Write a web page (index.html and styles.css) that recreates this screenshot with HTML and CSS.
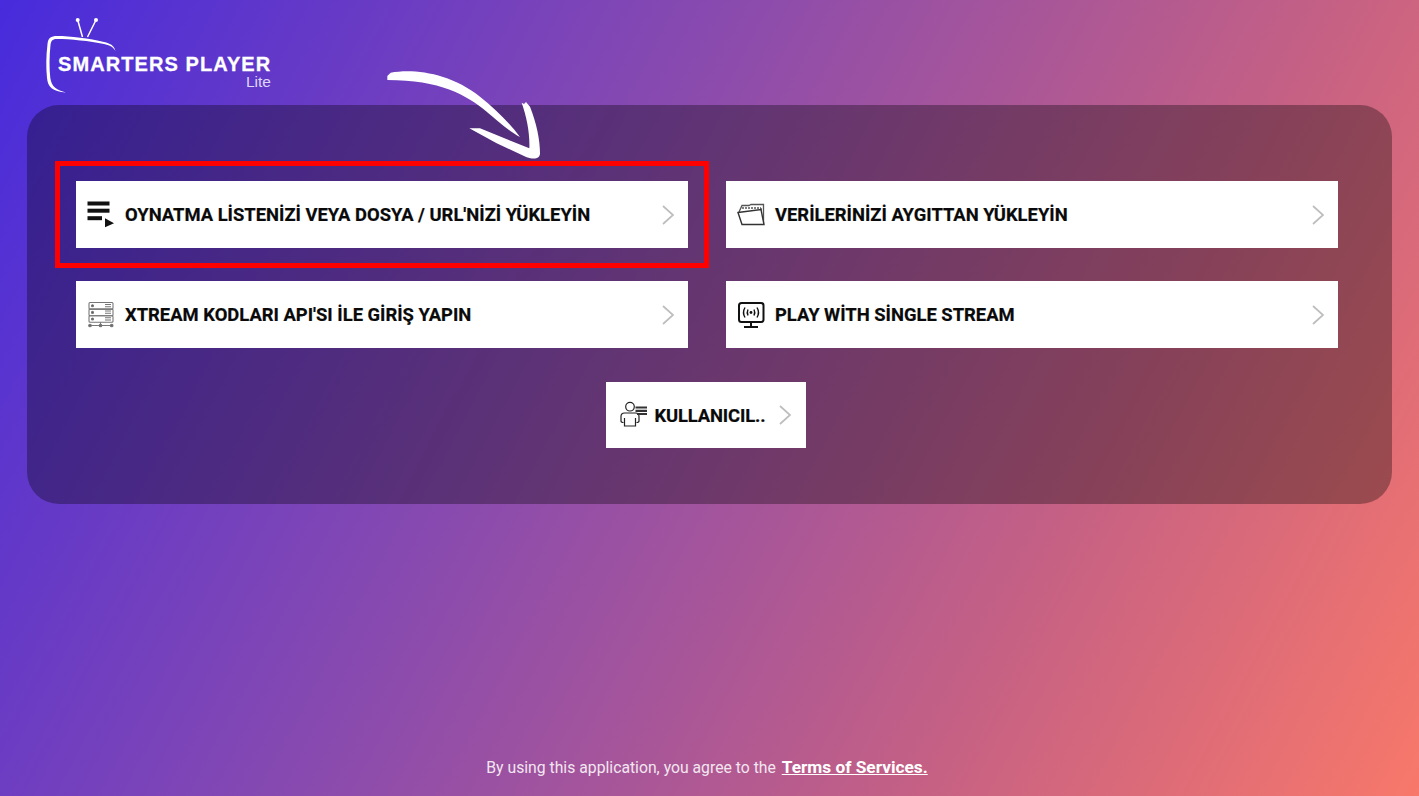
FILE: index.html
```html
<!DOCTYPE html>
<html>
<head>
    <title>Smarters Player Lite</title>
    <meta charset="UTF-8">
    <link rel="stylesheet" href="styles.css">
</head>
<body>
    <header class="top">
        <div class="logo">
            <svg class="logo-tv" width="80" height="80" viewBox="0 0 80 80" fill="none" stroke="#fff">
                <path d="M40.5 21 L35.7 4 M45.5 21 L54 4" stroke-width="1.5"/>
                <circle cx="35.7" cy="4" r="2" fill="#fff" stroke="none"/>
                <circle cx="54" cy="4" r="2" fill="#fff" stroke="none"/>
                <path d="M73.5 35 C72 29 68 27.5 62 26 C48 22.5 28 20 15 20 C9 20 6 22 5.5 28 C4 40 4 52 5 62 C6 71 10 75.5 24 76.5 C15 74 9.5 71 8.3 62 C7.2 52 7.3 40 8.5 29 C9 24.5 11 23 15 23 C28 23 48 25 62 28 C67 29 71 30.5 73.5 35 Z" fill="#fff" stroke="none"/>
            </svg>
            <div class="logo-name">SMARTERS PLAYER</div>
            <div class="logo-sub">Lite</div>
        </div>
    </header>
    <main class="panel">
        <div class="grid">
            <a class="card">
                <svg class="icon" width="30" height="30" viewBox="0 0 30 30" fill="#111">
                    <rect x="0.5" y="1.5" width="22" height="4"/>
                    <rect x="0.5" y="8.7" width="22" height="4"/>
                    <rect x="0.5" y="16.2" width="14.5" height="4"/>
                    <path d="M18 18.2 L27 23.2 L18 27.2 Z"/>
                </svg>
                <span class="label">OYNATMA LİSTENİZİ VEYA DOSYA / URL'NİZİ YÜKLEYİN</span>
                <svg class="chev" width="14" height="20" viewBox="0 0 14 20" fill="none" stroke="#bdbdbd" stroke-width="1.7"><path d="M2 1 L12 10 L2 19"/></svg>
                <span class="frame"></span>
            </a>
            <a class="card">
                <svg class="icon" width="30" height="30" viewBox="0 0 30 30" fill="none" stroke="#555" stroke-width="1.3">
                    <path d="M2 12 L5 5.5 H12 L14 4.5 H26.5 V24"/>
                    <path d="M5 8 H24" stroke-dasharray="2 1" stroke-width="1.6"/>
                    <path d="M24 8 V10"/>
                    <path d="M1 12.5 L24 9.5 L27 24.5 H5 Z" stroke="#333" stroke-width="1.4" fill="#fff"/>
                </svg>
                <span class="label">VERİLERİNİZİ AYGITTAN YÜKLEYİN</span>
                <svg class="chev" width="14" height="20" viewBox="0 0 14 20" fill="none" stroke="#bdbdbd" stroke-width="1.7"><path d="M2 1 L12 10 L2 19"/></svg>
            </a>
            <a class="card">
                <svg class="icon" width="30" height="30" viewBox="0 0 30 30" fill="none" stroke="#777" stroke-width="1.1">
                    <rect x="2" y="2.5" width="24" height="6.6" rx="1"/>
                    <rect x="2" y="9.1" width="24" height="6.6" rx="1"/>
                    <rect x="2" y="15.7" width="24" height="6.6" rx="1"/>
                    <circle cx="5.5" cy="5.8" r="1" fill="#444"/>
                    <circle cx="5.5" cy="12.4" r="1" fill="#444"/>
                    <circle cx="5.5" cy="19" r="1" fill="#444"/>
                    <path d="M18 4.5 H24 M18 6.8 H24 M18 11 H24 M18 13.3 H24 M18 17.7 H24 M18 20 H24"/>
                    <path d="M13.5 22.3 V25.5 M3 25.5 H25"/>
                    <circle cx="3" cy="25.5" r="1.3" fill="#666"/>
                    <circle cx="13.5" cy="25.5" r="1.3" fill="#666"/>
                    <circle cx="24.7" cy="25.5" r="1.3" fill="#666"/>
                </svg>
                <span class="label">XTREAM KODLARI API'SI İLE GİRİŞ YAPIN</span>
                <svg class="chev" width="14" height="20" viewBox="0 0 14 20" fill="none" stroke="#bdbdbd" stroke-width="1.7"><path d="M2 1 L12 10 L2 19"/></svg>
            </a>
            <a class="card">
                <svg class="icon" width="30" height="30" viewBox="0 0 30 30" fill="none" stroke="#111" stroke-width="2">
                    <rect x="2" y="3" width="24.5" height="19" rx="2.5"/>
                    <path d="M14 22 V27 M7 27 H21"/>
                    <circle cx="14" cy="12.5" r="1.4" fill="#111" stroke="none"/>
                    <path d="M11 9.5 C10 11.5 10 13.5 11 15.5 M17 9.5 C18 11.5 18 13.5 17 15.5 M8 7.5 C6.2 10.5 6.2 14.5 8 17.5 M20 7.5 C21.8 10.5 21.8 14.5 20 17.5" stroke-width="1.4"/>
                </svg>
                <span class="label">PLAY WİTH SİNGLE STREAM</span>
                <svg class="chev" width="14" height="20" viewBox="0 0 14 20" fill="none" stroke="#bdbdbd" stroke-width="1.7"><path d="M2 1 L12 10 L2 19"/></svg>
            </a>
        </div>
        <a class="card card-small">
            <svg class="icon" width="30" height="30" viewBox="0 0 30 30" fill="none" stroke="#222" stroke-width="1.2">
                <circle cx="10" cy="6.7" r="4.3"/>
                <path d="M1 21 V16.5 C1 14.5 2.5 13 4.5 13 H15.5 C17.5 13 19 14.5 19 16.5 V21 C19 22 18 22.5 16.5 22.5 M1 21 C1 22 2 22.5 3.5 22.5 M4.5 18 V26 H15.5 V18"/>
                <path d="M15.5 7.5 H27 M15.5 10.8 H27 M17 14 H27" stroke-width="2.2" stroke="#333"/>
            </svg>
            <span class="label label-small">KULLANICIL..</span>
            <svg class="chev" width="14" height="20" viewBox="0 0 14 20" fill="none" stroke="#bdbdbd" stroke-width="1.7"><path d="M2 1 L12 10 L2 19"/></svg>
        </a>
    </main>
    <svg class="arrow" width="190" height="110" viewBox="0 0 570 330" fill="#fff">
        <path d="M52 48 L62 38 C130 25 240 38 330 110 C375 145 420 190 450 231 C420 215 385 185 350 155 C290 105 210 60 52 60 Z"/>
        <path d="M298 205 L330 205 L478 265 C480 220 470 170 455 128 L462 132 L468 126 L480 140 C500 190 510 240 510 280 C510 295 495 300 470 292 L380 250 Z"/>
    </svg>
    <footer class="foot">By using this application, you agree to the <a class="terms">Terms of Services.</a></footer>
</body>
</html>
```

FILE: styles.css
```css
html, body {
    height: 100%;
}
body {
    margin: 0;
    min-height: 796px;
    box-sizing: border-box;
    overflow: hidden;
    display: flex;
    flex-direction: column;
    font-family: Roboto, sans-serif;
    background: linear-gradient(118deg, #472bdc 0%, #8a4bae 40%, #c46085 72%, #f8786a 100%);
}
.top {
    height: 105px;
    flex: none;
    padding-left: 42px;
}
.logo {
    position: relative;
    width: 240px;
    height: 105px;
}
.logo-tv {
    position: absolute;
    left: 0;
    top: 16px;
}
.logo-name {
    position: absolute;
    left: 16px;
    top: 55px;
    color: #fff;
    font-family: "Liberation Sans", sans-serif;
    font-weight: bold;
    font-size: 20px;
    line-height: 18px;
    letter-spacing: 1.08px;
    -webkit-text-stroke: 0.3px #fff;
    white-space: nowrap;
}
.logo-sub {
    position: absolute;
    right: 11px;
    top: 75px;
    color: #ddd6f5;
    font-family: "Liberation Sans", sans-serif;
    font-size: 15.5px;
    line-height: 13px;
}
.panel {
    margin: 0 27px;
    height: 399px;
    flex: none;
    box-sizing: border-box;
    padding: 76px 54px 0 49px;
    border-radius: 32px;
    background: rgba(0, 0, 0, 0.32);
    display: flex;
    flex-direction: column;
    align-items: center;
}
.grid {
    width: 100%;
    display: grid;
    grid-template-columns: 612px 612px;
    justify-content: space-between;
    gap: 33px 38px;
}
.card {
    position: relative;
    height: 67px;
    box-sizing: border-box;
    padding: 0 13px 0 11px;
    background: #fff;
    display: flex;
    align-items: center;
    gap: 8px;
    color: #0a0a0a;
}
.card-small {
    width: 200px;
    height: 66px;
    margin-top: 34px;
    margin-right: 3px;
    padding: 0 14px;
    gap: 5px;
}
.icon {
    flex: none;
}
.label {
    flex: 1;
    font-size: 18.4px;
    font-weight: 700;
    -webkit-text-stroke: 0.2px #0a0a0a;
    white-space: nowrap;
}
.label-small {
    letter-spacing: -0.15px;
}
.chev {
    flex: none;
}
.frame {
    position: absolute;
    top: -20px;
    bottom: -20px;
    left: -21px;
    right: -21px;
    border: 5px solid #fe0000;
}
.arrow {
    position: absolute;
    left: 370px;
    top: 60px;
}
.foot {
    margin-top: auto;
    padding: 0 5px 18px 0;
    text-align: center;
    color: #f2e6f0;
    font-size: 15.75px;
    line-height: 20px;
}
.terms {
    margin-left: 2px;
    color: #fff;
    font-size: 17.3px;
    font-weight: 700;
    text-decoration: underline;
}
```
